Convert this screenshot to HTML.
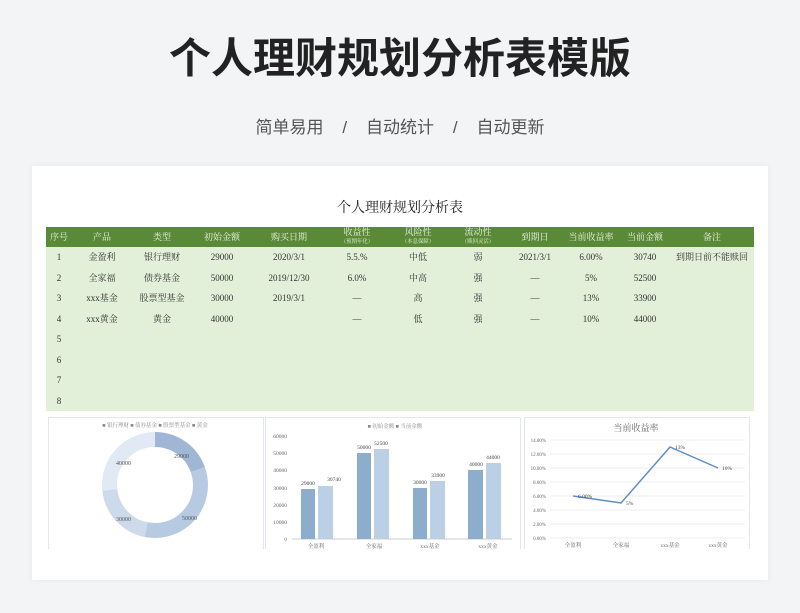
<!DOCTYPE html>
<html><head><meta charset="utf-8"><style>
body{margin:0;width:800px;height:613px;background:#f3f4f6;font-family:"Liberation Sans","Noto Sans CJK SC",sans-serif;position:relative;overflow:hidden}
.t{position:absolute;left:0;width:800px;text-align:center}
.card{position:absolute;left:32px;top:166px;width:736px;height:414px;background:#fff;box-shadow:0 0 6px rgba(0,0,0,.06)}
table{position:absolute;left:46px;top:227px;width:708px;border-collapse:collapse;font-family:"Liberation Serif","Noto Serif CJK SC",serif;font-size:9px;color:#333}
td,th{text-align:center;padding:0;height:20.5px;line-height:10px}
th{background:#5a8a38;color:#eaf3e0;font-weight:normal;height:20px}
th small{display:block;font-size:6px;transform:scale(.9)}
tbody{background:#e2efd9}
.p{position:absolute;background:#fff;border:1px solid #e3e6ea;top:417px;height:135px}
</style></head><body>
<div class="t" style="top:33px;font-size:42px;font-weight:bold;color:#222;line-height:52px">个人理财规划分析表模版</div>
<div class="t" style="top:113px;font-size:17px;color:#555;word-spacing:0">简单易用&nbsp;&nbsp;&nbsp;&nbsp;/&nbsp;&nbsp;&nbsp;&nbsp;自动统计&nbsp;&nbsp;&nbsp;&nbsp;/&nbsp;&nbsp;&nbsp;&nbsp;自动更新</div>
<div class="card"></div>
<div class="t" style="top:197px;font-size:14px;color:#222;font-family:'Liberation Serif','Noto Serif CJK SC',serif">个人理财规划分析表</div>
<table>
<colgroup><col style="width:26px"><col style="width:60px"><col style="width:60px"><col style="width:60px"><col style="width:74px"><col style="width:62px"><col style="width:60px"><col style="width:60px"><col style="width:54px"><col style="width:58px"><col style="width:50px"><col></colgroup>
<thead><tr><th>序号</th><th>产品</th><th>类型</th><th>初始金额</th><th>购买日期</th><th>收益性<small>（预期年化）</small></th><th>风险性<small>（本息保障）</small></th><th>流动性<small>（赎回灵活）</small></th><th>到期日</th><th>当前收益率</th><th>当前金额</th><th>备注</th></tr></thead>
<tbody>
<tr><td>1</td><td>金盈利</td><td>银行理财</td><td>29000</td><td>2020/3/1</td><td>5.5.%</td><td>中低</td><td>弱</td><td>2021/3/1</td><td>6.00%</td><td>30740</td><td>到期日前不能赎回</td></tr>
<tr><td>2</td><td>全家福</td><td>债券基金</td><td>50000</td><td>2019/12/30</td><td>6.0%</td><td>中高</td><td>强</td><td>—</td><td>5%</td><td>52500</td><td></td></tr>
<tr><td>3</td><td>xxx基金</td><td>股票型基金</td><td>30000</td><td>2019/3/1</td><td>—</td><td>高</td><td>强</td><td>—</td><td>13%</td><td>33900</td><td></td></tr>
<tr><td>4</td><td>xxx黄金</td><td>黄金</td><td>40000</td><td></td><td>—</td><td>低</td><td>强</td><td>—</td><td>10%</td><td>44000</td><td></td></tr>
<tr><td>5</td><td></td><td></td><td></td><td></td><td></td><td></td><td></td><td></td><td></td><td></td><td></td></tr>
<tr><td>6</td><td></td><td></td><td></td><td></td><td></td><td></td><td></td><td></td><td></td><td></td><td></td></tr>
<tr><td>7</td><td></td><td></td><td></td><td></td><td></td><td></td><td></td><td></td><td></td><td></td><td></td></tr>
<tr><td>8</td><td></td><td></td><td></td><td></td><td></td><td></td><td></td><td></td><td></td><td></td><td></td></tr>
</tbody></table>
<div class="p" style="left:48px;width:214px"></div>
<div class="p" style="left:265px;width:254px"></div>
<div class="p" style="left:524px;width:224px"></div>
<svg width="800" height="613" style="position:absolute;left:0;top:0" font-family="Liberation Serif,Noto Serif CJK SC,serif">
<text x="155" y="427" font-size="5.5" fill="#888" text-anchor="middle">■ 银行理财 ■ 债券基金 ■ 股票型基金 ■ 黄金</text>
<g transform="rotate(-90 155 485)" fill="none" stroke-width="15">
<circle cx="155" cy="485" r="45.5" stroke="#9fb7d4" stroke-dasharray="55.6 300"/>
<circle cx="155" cy="485" r="45.5" stroke="#b6cae1" stroke-dasharray="0 55.6 96 300"/>
<circle cx="155" cy="485" r="45.5" stroke="#ccdaeb" stroke-dasharray="0 151.6 57.6 300"/>
<circle cx="155" cy="485" r="45.5" stroke="#e0e9f4" stroke-dasharray="0 209.2 76.8 300"/>
</g>
<g font-size="6" fill="#555"><text x="174" y="458">29000</text><text x="182" y="520">50000</text><text x="116" y="521">30000</text><text x="116" y="465">40000</text></g>
<text x="395" y="428" font-size="5.5" fill="#888" text-anchor="middle">■ 初始金额 ■ 当前金额</text>
<g font-size="5.5" fill="#666" text-anchor="end"><text x="287" y="438">60000</text><text x="287" y="455">50000</text><text x="287" y="472">40000</text><text x="287" y="490">30000</text><text x="287" y="507">20000</text><text x="287" y="524">10000</text><text x="287" y="541">0</text></g>
<line x1="292" y1="539" x2="512" y2="539" stroke="#ccc"/>
<g fill="#8eadcc"><rect x="301" y="489" width="14" height="50"/><rect x="357" y="453" width="14" height="86"/><rect x="413" y="488" width="14" height="51"/><rect x="468" y="470" width="15" height="69"/></g>
<g fill="#bcd0e5"><rect x="318" y="486" width="15" height="53"/><rect x="374" y="449" width="15" height="90"/><rect x="430" y="481" width="15" height="58"/><rect x="486" y="463" width="15" height="76"/></g>
<g font-size="5.5" fill="#444" text-anchor="middle"><text x="308" y="485">29000</text><text x="334" y="481">30740</text><text x="364" y="449">50000</text><text x="381" y="445">52500</text><text x="420" y="484">30000</text><text x="438" y="477">33900</text><text x="476" y="466">40000</text><text x="493" y="459">44000</text></g>
<g font-size="5.5" fill="#666" text-anchor="middle"><text x="316" y="548">全盈利</text><text x="374" y="548">全家福</text><text x="430" y="548">xxx基金</text><text x="488" y="548">xxx黄金</text></g>
<text x="636" y="431" font-size="9" fill="#666" text-anchor="middle">当前收益率</text>
<g stroke="#eee"><line x1="550" y1="440" x2="745" y2="440"/><line x1="550" y1="454" x2="745" y2="454"/><line x1="550" y1="468" x2="745" y2="468"/><line x1="550" y1="482" x2="745" y2="482"/><line x1="550" y1="496" x2="745" y2="496"/><line x1="550" y1="510" x2="745" y2="510"/><line x1="550" y1="524" x2="745" y2="524"/><line x1="550" y1="538" x2="745" y2="538"/></g>
<g font-size="5" fill="#666" text-anchor="end"><text x="546" y="442">14.00%</text><text x="546" y="456">12.00%</text><text x="546" y="470">10.00%</text><text x="546" y="484">8.00%</text><text x="546" y="498">6.00%</text><text x="546" y="512">4.00%</text><text x="546" y="526">2.00%</text><text x="546" y="540">0.00%</text></g>
<polyline points="573,496 621,503 670,447 718,468" fill="none" stroke="#5b8ec4" stroke-width="1.5"/>
<g font-size="5.5" fill="#444"><text x="578" y="498">6.00%</text><text x="626" y="505">5%</text><text x="675" y="449">13%</text><text x="722" y="470">10%</text></g>
<g font-size="5.5" fill="#666" text-anchor="middle"><text x="573" y="547">全盈利</text><text x="621" y="547">全家福</text><text x="670" y="547">xxx基金</text><text x="718" y="547">xxx黄金</text></g>
</svg>
<div style="position:absolute;left:32px;top:549px;width:736px;height:31px;background:#fff"></div>
</body></html>
